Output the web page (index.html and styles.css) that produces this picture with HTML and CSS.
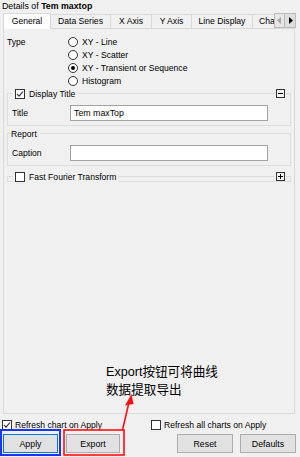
FILE: index.html
```
<!DOCTYPE html>
<html lang="en">
<head>
  <meta charset="utf-8" />
  <title>Details of Tem maxtop</title>
  <link rel="stylesheet" href="styles.css">
</head>
<body>
<div class="dlg">
  <div class="dlg-cap">Details of <b>Tem maxtop</b></div>

  <div class="tabbar">
    <div class="tabs">
      <span class="tab tab--on tab--general">General</span>
      <span class="tab tab--series">Data Series</span>
      <span class="tab tab--x">X Axis</span>
      <span class="tab tab--y">Y Axis</span>
      <span class="tab tab--line">Line Display</span>
      <span class="tab tab--chart">Chart Display</span>
    </div>
    <span class="tab-arrow tab-arrow--off">
      <svg width="5" height="7" viewBox="0 0 5 7"><path d="M4 0 L0 3.5 L4 7 Z" fill="#a6a6a6"/></svg>
    </span>
    <span class="tab-arrow">
      <svg width="5" height="7" viewBox="0 0 5 7"><path d="M1 0 L5 3.5 L1 7 Z" fill="#000"/></svg>
    </span>
  </div>

  <div class="page">
    <div class="type-row">
      <span class="type-lbl">Type</span>
      <div class="radios">
        <div class="radio-row"><span class="radio"></span>XY - Line</div>
        <div class="radio-row"><span class="radio"></span>XY - Scatter</div>
        <div class="radio-row"><span class="radio radio--on"></span>XY - Transient or Sequence</div>
        <div class="radio-row"><span class="radio"></span>Histogram</div>
      </div>
    </div>

    <div class="grp grp--title">
      <div class="grp-head">
        <span class="grp-legend"><span class="chk chk--on"><svg width="8" height="8" viewBox="0 0 8 8"><path d="M1 4 L3 6.2 L7 1.5" fill="none" stroke="#222" stroke-width="1.1"/></svg></span>Display Title</span>
        <span class="grp-fold"><svg width="9" height="9" viewBox="0 0 9 9"><rect x="0.5" y="0.5" width="8" height="8" fill="#f4f4f4" stroke="#333"/><path d="M2 4.5 H7" stroke="#000"/></svg></span>
      </div>
      <div class="field">
        <span class="field-lbl">Title</span>
        <span class="inp">Tem maxTop</span>
      </div>
    </div>

    <div class="grp grp--report">
      <div class="grp-head">
        <span class="grp-legend grp-legend--plain">Report</span>
      </div>
      <div class="field">
        <span class="field-lbl">Caption</span>
        <span class="inp"></span>
      </div>
    </div>

    <div class="grp grp--closed">
      <div class="grp-head">
        <span class="grp-legend"><span class="chk"></span>Fast Fourier Transform</span>
        <span class="grp-fold"><svg width="9" height="9" viewBox="0 0 9 9"><rect x="0.5" y="0.5" width="8" height="8" fill="#f4f4f4" stroke="#333"/><path d="M2 4.5 H7 M4.5 2 V7" stroke="#000"/></svg></span>
      </div>
    </div>
  </div>

  <div class="opts">
    <label class="opt"><span class="chk chk--on"><svg width="8" height="8" viewBox="0 0 8 8"><path d="M1 4 L3 6.2 L7 1.5" fill="none" stroke="#222" stroke-width="1.1"/></svg></span>Refresh chart on Apply</label>
    <label class="opt"><span class="chk"></span>Refresh all charts on Apply</label>
  </div>

  <div class="btns">
    <button class="btn btn--default btn--apply">Apply</button>
    <button class="btn btn--export">Export</button>
    <span class="btns-fill"></span>
    <button class="btn btn--reset">Reset</button>
    <button class="btn btn--defaults">Defaults</button>
  </div>

  <!-- annotation drawn over the dialog -->
  <div class="note">Export按钮可将曲线<br>数据提取导出</div>
  <svg class="marks" width="300" height="457" viewBox="0 0 300 457">
    <rect x="1" y="430" width="59" height="25" fill="none" stroke="#1a34ff" stroke-width="2"/>
    <rect x="64" y="430" width="60" height="25" fill="none" stroke="#ff1010" stroke-width="1.6"/>
    <path d="M122.5 430 L128.6 404" stroke="#ff1010" stroke-width="1.6" fill="none"/>
    <path d="M131.5 394 L125 405.5 L133.5 404 Z" fill="#ff1010"/>
  </svg>
</div>
</body>
</html>
```

FILE: styles.css
```
:root {
  --bg: #f0f0f0;
  --line: #d9d9d9;
  --grp: #dcdcdc;
  --btn: #e1e1e1;
  --btn-line: #adadad;
}
html, body {
  margin: 0;
  padding: 0;
}
body {
  background: var(--bg);
  font-family: "Liberation Sans", Arial, sans-serif;
  font-size: 8.6px;
  color: #000;
}
.dlg {
  position: relative;
  width: 300px;
  height: 457px;
  display: flex;
  flex-direction: column;
  overflow: hidden;
}
.dlg-cap {
  height: 13px;
  line-height: 12px;
  padding-left: 2px;
  font-size: 8.8px;
}

/* tabs */
.tabbar {
  display: flex;
  align-items: flex-end;
  height: 16px;
  margin-left: 3px;
  margin-bottom: -1px;
  position: relative;
  z-index: 1;
}
.tabs {
  display: flex;
  align-items: flex-end;
  width: 271px;
  overflow: hidden;
}
.tab {
  flex: none;
  box-sizing: border-box;
  height: 14px;
  margin-bottom: 1px;
  line-height: 13px;
  text-align: center;
  border: 1px solid var(--line);
  border-bottom: none;
  margin-left: -1px;
  background: var(--bg);
  white-space: nowrap;
}
.tab--on {
  height: 16px;
  margin-bottom: 0;
  margin-left: 0;
  line-height: 15px;
  background: #fff;
  position: relative;
}
.tab--general { width: 48px; }
.tab--series { width: 61px; }
.tab--x { width: 42px; }
.tab--y { width: 41px; }
.tab--line { width: 62px; }
.tab--chart { width: 60px; text-align: left; padding-left: 6px; }
.tab-arrow {
  box-sizing: border-box;
  width: 11px;
  height: 15px;
  margin-bottom: 1px;
  background: #e6e6e6;
  border: 1px solid #b9b9b9;
  display: flex;
  align-items: center;
  justify-content: center;
}
.tab-arrow + .tab-arrow {
  border-left: none;
  background: #dedede;
}

/* tab page */
.page {
  box-sizing: border-box;
  height: 386px;
  margin: 0 5px 0 3px;
  border: 1px solid var(--line);
  padding: 0 3px;
}
.type-row {
  display: flex;
  padding-top: 6px;
}
.type-lbl {
  width: 61px;
  line-height: 12px;
  padding-top: 1px;
}
.radios {
  display: flex;
  flex-direction: column;
}
.radio-row {
  display: flex;
  align-items: center;
  height: 13px;
}
.radio {
  box-sizing: border-box;
  width: 10px;
  height: 10px;
  border: 1px solid #333;
  border-radius: 50%;
  background: #fff;
  margin-right: 4px;
  display: flex;
  align-items: center;
  justify-content: center;
}
.radio--on::after {
  content: "";
  width: 4px;
  height: 4px;
  border-radius: 50%;
  background: #000;
}

/* group boxes */
.grp {
  box-sizing: border-box;
  border: 1px solid var(--grp);
  padding: 0 3px 4px 4px;
}
.grp--title { margin-top: 6px; }
.grp--report { margin-top: 7px; }
.grp--closed {
  margin-top: 10px;
  height: 6px;
  padding-bottom: 0;
}
.grp-head {
  display: flex;
  align-items: center;
  justify-content: space-between;
  height: 11px;
  margin-top: -6px;
}
.grp-legend {
  display: flex;
  align-items: center;
  background: var(--bg);
  padding: 0 2px 0 2px;
  margin-left: 1px;
}
.grp-legend--plain {
  margin-left: -1px;
  padding: 0 3px 0 0;
}
.grp-fold {
  display: flex;
  background: var(--bg);
  padding: 0 1px;
  margin-right: 1px;
}
.chk {
  box-sizing: border-box;
  width: 10px;
  height: 10px;
  border: 1px solid #333;
  background: #fff;
  margin-right: 4px;
  display: flex;
  align-items: center;
  justify-content: center;
}
.field {
  display: flex;
  align-items: center;
  margin-top: 6px;
}
.field-lbl {
  width: 58px;
}
.inp {
  box-sizing: border-box;
  width: 198px;
  height: 16px;
  border: 1px solid #a3a3a3;
  background: #fff;
  padding-left: 3px;
  line-height: 14px;
  font-size: 8.8px;
}

/* bottom */
.opts {
  display: flex;
  margin-top: 6px;
  padding-left: 2px;
  height: 10px;
}
.opt {
  display: flex;
  align-items: center;
  width: 150px;
}
.opt .chk {
  margin-right: 3px;
}
.btns {
  display: flex;
  margin-top: 4px;
  padding: 0 4px 0 3px;
}
.btn {
  box-sizing: border-box;
  height: 19px;
  padding: 0;
  background: var(--btn);
  border: 1px solid var(--btn-line);
  font-family: inherit;
  font-size: 8.8px;
  color: #000;
}
.btn--default {
  border-color: #0078d7;
}
.btn--apply { width: 55px; }
.btn--export { width: 54px; margin-left: 8px; }
.btn--reset { width: 56px; }
.btn--defaults { width: 56px; margin-left: 7px; }
.btns-fill { flex: 1; }

/* annotation */
.note {
  position: absolute;
  left: 106px;
  top: 363px;
  font-family: "Liberation Sans", "Noto Sans CJK SC", sans-serif;
  font-size: 12.6px;
  line-height: 18px;
}
.marks {
  position: absolute;
  left: 0;
  top: 0;
  pointer-events: none;
}
```
